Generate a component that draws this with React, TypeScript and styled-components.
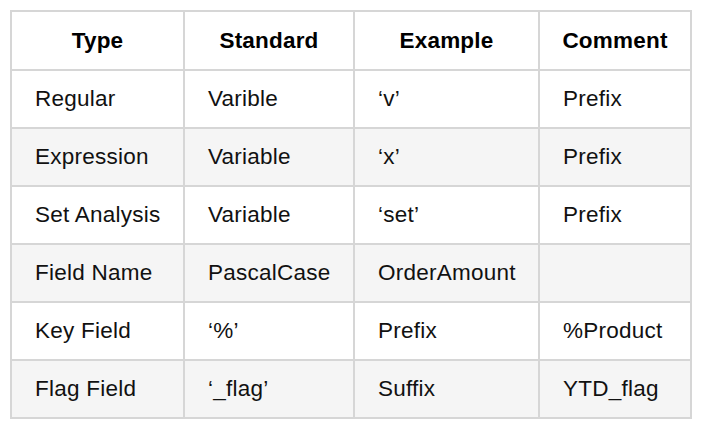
import React from "react";
import styled, { createGlobalStyle } from "styled-components";

const Global = createGlobalStyle`
  html, body { margin: 0; padding: 0; background: #ffffff; }
  body { font-family: "Liberation Sans", Arial, Helvetica, sans-serif; }
`;

const Page = styled.div`
  padding: 10px 0 0 10px;
`;

const Grid = styled.div`
  display: grid;
  grid-template-columns: 171px 168px 183px 150px;
  grid-template-rows: 57px repeat(6, 56px);
  gap: 2px;
  padding: 2px;
  width: 682px;
  box-sizing: border-box;
  background: #d6d6d6;
`;

const HeadCell = styled.div`
  background: #ffffff;
  display: flex;
  align-items: center;
  justify-content: center;
  font-weight: 700;
  font-size: 22.5px;
  letter-spacing: 0.2px;
  color: #000;
`;

const Cell = styled.div<{ $alt: boolean }>`
  background: ${(p) => (p.$alt ? "#f5f5f5" : "#ffffff")};
  display: flex;
  align-items: center;
  padding-left: 23px;
  font-size: 22.5px;
  letter-spacing: 0.25px;
  color: #111;
`;

const headers = ["Type", "Standard", "Example", "Comment"];
const rows = [
  ["Regular", "Varible", "‘v’", "Prefix"],
  ["Expression", "Variable", "‘x’", "Prefix"],
  ["Set Analysis", "Variable", "‘set’", "Prefix"],
  ["Field Name", "PascalCase", "OrderAmount", ""],
  ["Key Field", "‘%’", "Prefix", "%Product"],
  ["Flag Field", "‘_flag’", "Suffix", "YTD_flag"],
];

export default function App() {
  return (
    <>
      <Global />
      <Page>
        <Grid>
          {headers.map((h) => (
            <HeadCell key={h}>{h}</HeadCell>
          ))}
          {rows.map((r, i) =>
            r.map((c, j) => (
              <Cell key={`${i}-${j}`} $alt={i % 2 === 1}>
                {c}
              </Cell>
            ))
          )}
        </Grid>
      </Page>
    </>
  );
}
